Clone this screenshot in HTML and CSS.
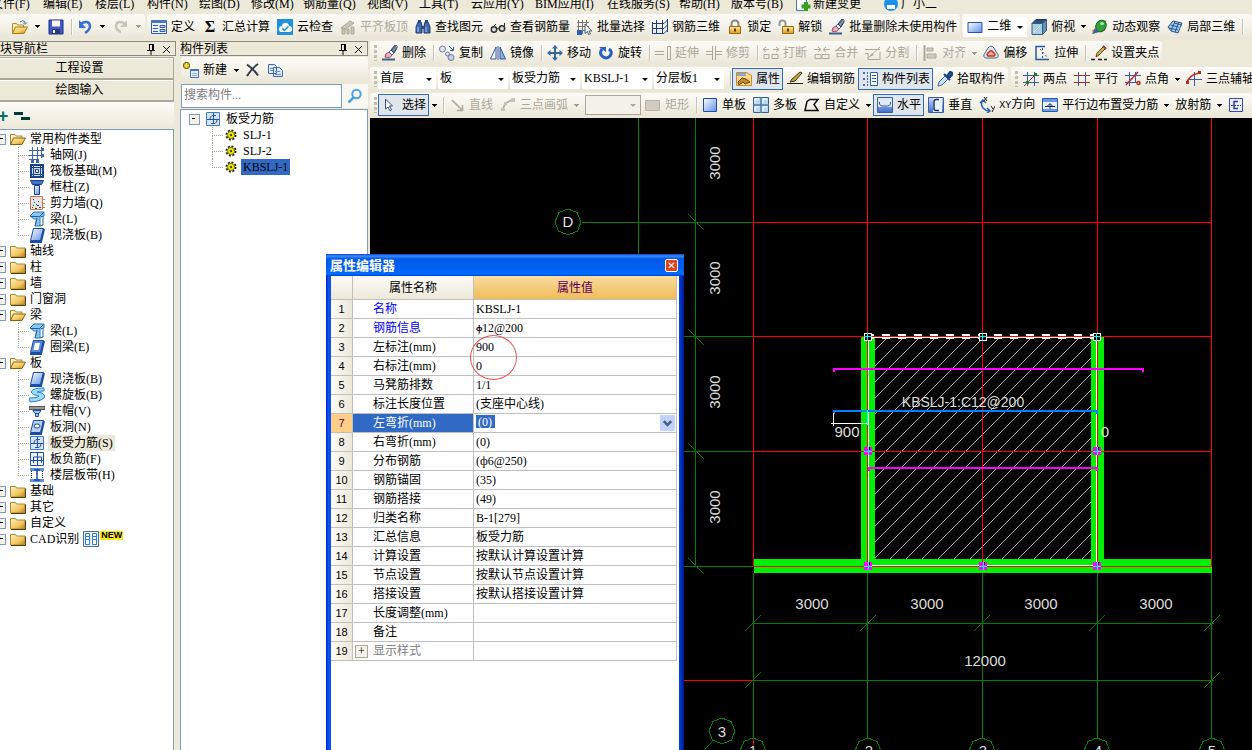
FILE: index.html
```
<!DOCTYPE html>
<html lang="zh-CN">

<head>
    <meta charset="UTF-8" />
    <title>属性编辑器 - 板受力筋</title>
    <link rel="stylesheet" href="styles.css">
</head>

<body>
    <!-- icon sprite -->
    <svg class="sprite" aria-hidden="true">
        <defs>
            <linearGradient id="gFolder" x1="0" y1="0" x2="1" y2="1"><stop offset="0" stop-color="#fff3b8"/><stop offset=".6" stop-color="#f0c860"/><stop offset="1" stop-color="#b87d10"/></linearGradient>
            <linearGradient id="gBlue" x1="0" y1="0" x2="1" y2="1"><stop offset="0" stop-color="#ffffff"/><stop offset="1" stop-color="#5f8fe8"/></linearGradient>
            <linearGradient id="gDeep" x1="0" y1="0" x2="0" y2="1"><stop offset="0" stop-color="#c8dcff"/><stop offset="1" stop-color="#3c6ccc"/></linearGradient>
            <linearGradient id="gGold" x1="0" y1="0" x2="0" y2="1"><stop offset="0" stop-color="#ffe9a0"/><stop offset="1" stop-color="#e09a20"/></linearGradient>
            <symbol id="folder" viewBox="0 0 16 16"><path d="M.5 3.500h5l1 1.500h8.500v9h-14.500z" fill="url(#gFolder)" stroke="#a8863a"/><path d="M1 14.500h14.500v-9" fill="none" stroke="#5c3c08"/></symbol>
            <symbol id="folderOpen" viewBox="0 0 16 16"><path d="M.5 13.500v-10h4.500l1 1.500h6v3" fill="#fdf0b0" stroke="#a8863a"/><path d="M.5 13.500l3-6.500h12l-3.500 6.500z" fill="url(#gFolder)" stroke="#8a6210"/></symbol>
            <symbol id="open" viewBox="0 0 16 16"><path d="M.5 14.500v-10h4l1 1.500h6v3" fill="#fdf0b0" stroke="#b08a30"/><path d="M.5 14.500l3-6.500h12l-3.500 6.500z" fill="url(#gFolder)" stroke="#a87818"/><path d="M8 3q3-3 5 0v2M11 3.500l2 2 2-2" fill="none" stroke="#4a7ab0"/></symbol>
            <symbol id="save" viewBox="0 0 16 16"><path d="M1 1h14v14h-14z" fill="#4058c8" stroke="#1c2c80"/><path d="M4 1.500h8v6h-8z" fill="#f4f6ff"/><path d="M4 10h8v5h-8z" fill="#283878"/><path d="M5 11h2v3h-2z" fill="#fff"/></symbol>
            <symbol id="undo" viewBox="0 0 16 16"><path d="M3 5q9-5 10 2 0 4-5 7" fill="none" stroke="#3a6fd8" stroke-width="2.500"/><path d="M2 1v8h7z" fill="#3a6fd8"/></symbol>
            <symbol id="redo" viewBox="0 0 16 16"><path d="M13 5q-9-5-10 2 0 4 5 6" fill="none" stroke="#c8c5b8" stroke-width="2.500"/><path d="M14 1v7h-7z" fill="#c8c5b8"/></symbol>
            <symbol id="define" viewBox="0 0 16 16"><path d="M.5 1.500h15v13h-15z" fill="#eef4ff" stroke="#385c9c"/><path d="M0 1h16v3h-16z" fill="#4c78c0"/><path d="M2 6.500h5M2 9.500h5M2 12.500h5" stroke="#385c9c"/><path d="M9 6.500h5v2h-5zM9 10.500h5v2h-5z" fill="#bcd4f8" stroke="#385c9c"/></symbol>
            <symbol id="cloud" viewBox="0 0 16 16"><path d="M0 0h16v16h-16z" fill="#2090e0"/><path d="M4 13q-3-1-2-4 1-2 3-2 1-4 5-3 2 1 2 3 3 0 3 3 0 3-3 3z" fill="#fff"/><path d="M5 9l2.500 2.500 4-4" fill="none" stroke="#2090e0" stroke-width="1.500"/></symbol>
            <symbol id="align" viewBox="0 0 16 16"><path d="M1 9l9-7 4 2-8 6zM2 10h3v5h-3zM7 10h2v5h-2zM11 8h3v7h-3z" fill="#c8c5b8" stroke="#aca899"/></symbol>
            <symbol id="find" viewBox="0 0 16 16"><path d="M3 3h3l1 4v7h-6v-6zM10 3h3l2 5v6h-6v-7z" fill="#4068a8" stroke="#203c78"/><path d="M6 7h4v3h-4zM3 1h3v2h-3zM10 1h3v2h-3z" fill="#28488c"/><path d="M3 8v5M11 8v5" stroke="#b0ccf4"/></symbol>
            <symbol id="glasses" viewBox="0 0 16 16"><circle cx="4" cy="10.500" r="2.700" fill="#d8e0e8" stroke="#333" stroke-width="1.500"/><circle cx="12" cy="9.500" r="2.700" fill="#d8e0e8" stroke="#333" stroke-width="1.500"/><path d="M6.500 10l3-1M2 9l4-4M14.500 8v-4" fill="none" stroke="#333"/></symbol>
            <symbol id="batch" viewBox="0 0 16 16"><path d="M1.500 1v14M5.500 1v14M9.500 1v8M0 3.500h12M0 7.500h12M0 11.500h8" stroke="#777" fill="none"/><path d="M0 11h5v5h-5z" fill="#2860c8"/><path d="M8 5l7 7h-3l1.500 3-2 .5-1-3-2.500 2z" fill="#eee" stroke="#567"/></symbol>
            <symbol id="rebar3d" viewBox="0 0 16 16"><path d="M.5 3v12M4.500 1v14M10.500 1v14M15.500 0v13M0 4.500h12l4-4M0 9.500h12l4-4M0 14.500h12l4-4" fill="none" stroke="#1c3c88"/></symbol>
            <symbol id="lock" viewBox="0 0 16 16"><path d="M4.500 8v-3q0-3.500 3.500-3.500t3.500 3.500v3" fill="none" stroke="#888" stroke-width="2"/><path d="M2.500 7.500h11v7h-11z" fill="url(#gGold)" stroke="#9a6a10"/><path d="M7 9.500h2v3h-2z" fill="#5c3c08"/></symbol>
            <symbol id="unlock" viewBox="0 0 16 16"><path d="M1.500 7v-2.500q0-3 3-3t3 3v3" fill="none" stroke="#999" stroke-width="2"/><path d="M4.500 7.500h11v7h-11z" fill="url(#gGold)" stroke="#9a6a10"/><path d="M9 9.500h2v3h-2z" fill="#5c3c08"/></symbol>
            <symbol id="brush" viewBox="0 0 16 16"><path d="M0 14.500h13" stroke="#3c5c90" stroke-width="2"/><path d="M3 12q0-4 4-5l3 3q-2 4-7 2z" fill="#e8b0c0" stroke="#a04868"/><path d="M7 7l2-2 3 3-2 2z" fill="#f4f6fa" stroke="#48689c"/><path d="M9 5l4-5 2 1v2l-3 5z" fill="#4878b8" stroke="#28487c"/><path d="M11 6l4-5" stroke="#f0a030"/></symbol>
            <symbol id="view2d" viewBox="0 0 16 16"><path d="M1 3.500h14v10h-14z" fill="url(#gBlue)" stroke="#2850b8"/></symbol>
            <symbol id="cube" viewBox="0 0 16 16"><path d="M1 4.500l4-4h10.500l-4 4z" fill="#2c5078" stroke="#20384c"/><path d="M1 4.500h10.500v11h-10.500z" fill="#a8d0e8" stroke="#385c80"/><path d="M11.500 4.500l4-4v11l-4 4z" fill="#6090b4" stroke="#385c80"/><path d="M3 13l6-6" stroke="#fff"/></symbol>
            <symbol id="orbit" viewBox="0 0 16 16"><path d="M0 12q8-2 14-10M1 14q6-2 12-3" fill="none" stroke="#e89020" stroke-width="1.500"/><ellipse cx="9" cy="7" rx="5" ry="6" fill="#30a040" stroke="#186028" transform="rotate(30 9 7)"/><ellipse cx="10" cy="4.500" rx="2" ry="1.500" fill="#a0f0a0"/><path d="M0 15l7-2-4-4z" fill="#4060a0"/></symbol>
            <symbol id="local3d" viewBox="0 0 16 16"><path d="M1 8l5-6 9 2-4 10-7-2z" fill="#a8ccec" stroke="#285890"/><path d="M3.500 6l8 2M8 2.500l-4 9M12 3l-4 10M2 9l9 2M7 4l8 2" fill="none" stroke="#285890"/></symbol>
            <symbol id="copyObj" viewBox="0 0 16 16"><circle cx="3.500" cy="4" r="3" fill="#dfe6f4" stroke="#6c7c98"/><circle cx="8.500" cy="9" r="2" fill="#dfe6f4" stroke="#6c7c98"/><circle cx="12" cy="12.500" r="3" fill="#c4d0e4" stroke="#6c7c98"/><path d="M10 1l4 4M14.500 2v3.500h-3.500" fill="none" stroke="#2c58a8"/></symbol>
            <symbol id="mirror" viewBox="0 0 16 16"><path d="M6 2v12h-5.500z" fill="#f4f8ff" stroke="#34589c"/><path d="M10 2v12h5.500z" fill="#88b0ec" stroke="#34589c"/><path d="M8 1v14" stroke="#34589c"/></symbol>
            <symbol id="move" viewBox="0 0 16 16"><path d="M8 2v12M2 8h12" stroke="#34689c" stroke-width="2"/><path d="M8 0l3 3.500h-6zM8 16l3-3.500h-6zM0 8l3.500-3v6zM16 8l-3.500-3v6z" fill="#34689c"/></symbol>
            <symbol id="rotate" viewBox="0 0 16 16"><path d="M4 4q-3 4 0 7 4 4 8 0 3-4-1-7" fill="none" stroke="#2860c8" stroke-width="3"/><path d="M1 2h7v5z" fill="#2860c8"/></symbol>
            <symbol id="extend" viewBox="0 0 16 16"><path d="M0 6.500h9M0 9.500h9M12.500 1v14M15.500 1v14M12 1.500h4M12 14.500h4" stroke="#aca899" fill="none"/></symbol>
            <symbol id="trim" viewBox="0 0 16 16"><path d="M0 6.500h6M0 9.500h6M10 6.500h6M10 9.500h6M6.500 1v14M9.500 1v14" stroke="#aca899" fill="none"/></symbol>
            <symbol id="break" viewBox="0 0 16 16"><path d="M1 9.500h5v4h-5zM9 9.500h6v4h-6zM0 4.500h6M10 4.500h6M3 2l-3 2.500 3 2.500M13 2l3 2.500-3 2.500" stroke="#aca899" fill="none"/></symbol>
            <symbol id="merge" viewBox="0 0 16 16"><path d="M1 9.500h6v4h-6zM8 9.500h7v4h-7zM0 4.500h6M10 4.500h6M4 2l3 2.500-3 2.500M12 2l-3 2.500 3 2.500" stroke="#aca899" fill="none"/></symbol>
            <symbol id="split" viewBox="0 0 16 16"><path d="M0 4.500h15M0 8.500h3v6h12v-8M3 13l12-11" stroke="#aca899" fill="none"/><path d="M4 12l3-4 2 2z" fill="#aca899"/></symbol>
            <symbol id="alignTo" viewBox="0 0 16 16"><path d="M2.500 0v16" stroke="#aca899" stroke-width="2"/><path d="M5 3h6v3h-6zM5 9h9v4h-9z" fill="#d0cdc0" stroke="#aca899"/></symbol>
            <symbol id="offset" viewBox="0 0 16 16"><path d="M3 13q-4-1-1-5l3-5q3-4 6 0l3 5q3 4-1 5z" fill="#dce8f4" stroke="#48688c"/><path d="M5 11q-2-1 0-3l2-2q1-1 2 0l2 2q2 2 0 3z" fill="#f8b0a0" stroke="#d03020" stroke-width="1.500"/></symbol>
            <symbol id="stretch" viewBox="0 0 16 16"><path d="M11 1.500h-9v13h13" fill="none" stroke="#28589c" stroke-width="1.500"/><path d="M6 4l8 9M8.500 3v11" stroke="#28589c" stroke-dasharray="2 2"/></symbol>
            <symbol id="grip" viewBox="0 0 16 16"><path d="M0 14.500h4M7 14.500h4M13 14.500h3" stroke="#222" stroke-width="1.500"/><path d="M5 12l1-4 7-7 2 2-7 7z" fill="#d8b050" stroke="#5c4820"/><path d="M12 1l3 3" stroke="#c03028" stroke-width="2"/></symbol>
            <symbol id="props" viewBox="0 0 16 16"><path d="M.5 1.500h10l5 3v10h-15z" fill="#ffd890" stroke="#d88820"/><path d="M1 2h9v3h-9z" fill="#88a8d8"/><path d="M2 11l4-4 4 1 4 3-5 2-2-2-4 3z" fill="#c88c20" stroke="#684408"/></symbol>
            <symbol id="pencil" viewBox="0 0 16 16"><path d="M0 12.500h16" stroke="#222"/><path d="M3 11l2-3 8-7 2 1-7 8z" fill="#c8a040" stroke="#443410"/></symbol>
            <symbol id="listIcon" viewBox="0 0 16 16"><path d="M8.500 1.500h7v13h-7z" fill="#fff" stroke="#2c60b0"/><path d="M10 4.500h4M10 7.500h4M10 10.500h4" stroke="#2c60b0"/><path d="M1 2h2M1 8h2M1 14h2M5 2h1M5 5h1M5 8h1M5 11h1M5 14h1" stroke="#4470b0" stroke-width="2"/></symbol>
            <symbol id="picker" viewBox="0 0 16 16"><path d="M1 15l1-4 7-7 3 3-7 7z" fill="#c8e0f4" stroke="#3c6c9c"/><path d="M7 3l6 6M10 5l3-4q3 0 2 3l-3 3z" fill="#2460ac" stroke="#18407c" stroke-width="2"/></symbol>
            <symbol id="twoPt" viewBox="0 0 16 16"><path d="M4.500 1v14M11.500 1v14M0 4.500h16M0 11.500h16" stroke="#385ca8"/><path d="M1 15l13-13" stroke="#c02828"/><path d="M3 10h3v3h-3zM11 2h3v3h-3z" fill="#208020"/></symbol>
            <symbol id="parallel" viewBox="0 0 16 16"><path d="M4.500 1v14M11.500 1v14" stroke="#385ca8"/><path d="M0 4.500h16M0 11.500h16" stroke="#c02828"/></symbol>
            <symbol id="angle" viewBox="0 0 16 16"><path d="M4.500 1v14M10.500 1v11M0 4.500h16M0 11.500h12" stroke="#385ca8"/><path d="M1 14l12-13" stroke="#c02828" stroke-width="1.500"/><circle cx="13.500" cy="12" r="1.500" fill="none" stroke="#c02828" stroke-width="1.500"/></symbol>
            <symbol id="arcAxis" viewBox="0 0 16 16"><path d="M8.500 1v14M3 8.500h13" stroke="#385ca8"/><path d="M1 13q1-9 12-11" fill="none" stroke="#d02020" stroke-width="1.500"/><path d="M0 10h3v3h-3zM12 0h3v3h-3z" fill="#d02020"/></symbol>
            <symbol id="cursor" viewBox="0 0 16 16"><path d="M3.500 2v10l2.500-2 2 4 1.500-1-2-4h3z" fill="#fff" stroke="#385080"/></symbol>
            <symbol id="line" viewBox="0 0 16 16"><path d="M3 3l10 10M13.500 8v5.500h-5.500" stroke="#aca899" stroke-width="1.500" fill="none"/></symbol>
            <symbol id="arc" viewBox="0 0 16 16"><path d="M3 14q0-9 10-11" fill="none" stroke="#aca899" stroke-width="1.500"/><path d="M1 11h4v3h-4zM11 1h4v4h-4zM4 5h3v3h-3z" fill="#c8c5b8"/></symbol>
            <symbol id="rect" viewBox="0 0 16 16"><path d="M.5 3.500h14v10h-14z" fill="#d0cdc0" stroke="#b8b5a8"/></symbol>
            <symbol id="slab" viewBox="0 0 16 16"><path d="M1.500 1.500h13v13h-13z" fill="url(#gBlue)" stroke="#1c4ca8"/></symbol>
            <symbol id="multi" viewBox="0 0 16 16"><path d="M.5 .5h15v15h-15z" fill="#b8d8f4" stroke="#3c608c"/><path d="M8 0v16M0 8h16" stroke="#5078a8" stroke-width="1.500"/><path d="M2 6v-4h4M10 6v-4h4M2 14v-4h4M10 14v-4h4" fill="none" stroke="#fff"/></symbol>
            <symbol id="custom" viewBox="0 0 16 16"><path d="M1 13.500l2-9 3-2h8l-4 5 4 6z" fill="none" stroke="#111" stroke-width="1.500"/></symbol>
            <symbol id="horiz" viewBox="0 0 16 16"><path d="M.5 .5h15v15h-15z" fill="url(#gDeep)" stroke="#3c5ca0"/><path d="M1 1h14v9h-14z" fill="#dfeafc"/><path d="M2.500 5v2q1 2 3 2h5q2 0 3-2v-2" fill="none" stroke="#38507c"/></symbol>
            <symbol id="vert" viewBox="0 0 16 16"><path d="M.5 .5h15v15h-15z" fill="url(#gDeep)" stroke="#3c5ca0"/><path d="M5 1h9v14h-9z" fill="#eaf2ff"/><path d="M11 2.500h-3q-2 0-2 2v7q0 2 2 2h3" fill="none" stroke="#18306c" stroke-width="1.500"/></symbol>
            <symbol id="xy" viewBox="0 0 16 16"><path d="M4 3q-3 4 0 8 3 3 6 3M1 6l3-3 3 3M8 11l3 3-3 2" fill="none" stroke="#2860b8" stroke-width="1.500"/><path d="M5 0l3 4M8 0l-3 4M12 9l2 3M16 9l-3 6" stroke="#222"/></symbol>
            <symbol id="edge" viewBox="0 0 16 16"><path d="M.5 1.500h15v13h-15z" fill="#eaf2ff" stroke="#2858b0"/><path d="M1 2h14v3h-14zM1 12h14v2h-14z" fill="#6c98e8"/><path d="M3 9.500h10M8 12v-5M5.500 9l2.500-2.500 2.500 2.500" fill="none" stroke="#18306c"/></symbol>
            <symbol id="secE" viewBox="0 0 16 16"><path d="M1.500 1.500h13v13h-13z" fill="#eaf0ff" stroke="#4048c0"/><path d="M10 4.500h-4v7h4" fill="none" stroke="#3038a0" stroke-width="1.500"/><path d="M3 8.500h10" stroke="#3038a0" stroke-dasharray="2 1"/></symbol>
            <symbol id="newItem" viewBox="0 0 16 16"><path d="M3.500 0v7M0 3.500h7" stroke="#7c6808" stroke-width="4"/><path d="M3.500 1v5M1 3.500h5" stroke="#f8e040" stroke-width="2"/><path d="M7.500 7.500h8v8h-8z" fill="#e4eeff" stroke="#4c74b8"/><path d="M7 7h9v2h-9z" fill="#4c74b8"/><path d="M9 11.500h5M9 13.500h5" stroke="#8cacdc"/></symbol>
            <symbol id="del" viewBox="0 0 16 16"><path d="M2 2.500q7 5 11 11M13 2q-7 5-11 12" fill="none" stroke="#333c48" stroke-width="2"/></symbol>
            <symbol id="copy" viewBox="0 0 16 16"><path d="M1.500 2.500h6l2 2v7h-8zM6.500 5.500h6l3 3v6h-9z" fill="#dce8fc" stroke="#3c68b8"/><path d="M8 9.500h5M8 12.500h6M3 6.500h3M3 8.500h3" stroke="#6c94d4"/></symbol>
            <symbol id="search" viewBox="0 0 16 16"><circle cx="9.500" cy="6" r="4.200" fill="#fff" stroke="#4ca0e4" stroke-width="2"/><path d="M6.500 9.500l-5 5" stroke="#4ca0e4" stroke-width="2.500"/></symbol>
            <symbol id="pin" viewBox="0 0 16 16"><path d="M6.500 3v6M6 3.500h4M4 9.500h8M8 10v4" stroke="#000" fill="none"/><path d="M9 3h2v6h-2z"/></symbol>
            <symbol id="xSmall" viewBox="0 0 16 16"><path d="M4 5l7 7M11 5l-7 7" stroke="#000"/></symbol>
            <symbol id="axisNet" viewBox="0 0 16 16"><path d="M3.500 0v15M8.500 0v15M0 3.500h14M0 8.500h14M12.500 0v11M0 12.500h10" stroke="#3c64b4"/><path d="M12 1h3v3h-3zM12 7h3v3h-3zM2 13h3v3h-3zM7 13h3v3h-3z" fill="#3c64b4"/></symbol>
            <symbol id="raft" viewBox="0 0 16 16"><path d="M2 2h12v12h-12z" fill="#c8dcf8" stroke="#1c4484" stroke-width="2"/><path d="M4.500 2v12M11.500 2v12M2 4.500h12M2 11.500h12" stroke="#1c4484"/><path d="M6.500 6.500h3v3h-3z" fill="#fff" stroke="#1c4484"/></symbol>
            <symbol id="column" viewBox="0 0 16 16"><path d="M1.500 1.500h13l-2 4h-9z" fill="#4074c8" stroke="#18408c"/><path d="M5.500 6.500h5v9h-5z" fill="url(#gBlue)" stroke="#18408c"/></symbol>
            <symbol id="wall" viewBox="0 0 16 16"><path d="M1.500 1.500h12v13h-12z" fill="#e4e4e4" stroke="#c87850"/><path d="M3 12.500h1M5 7.500h1M8 10.500h2M6 13.500h2M10 12.500h2M4 4.500h1M9 6.500h1M7 9.500h1M4 10.500h1" stroke="#444"/><path d="M13 4.500h3M13 8.500h3M13 12.500h3" stroke="#d08040"/></symbol>
            <symbol id="beam" viewBox="0 0 16 16"><path d="M1 5l4-4h10v4l-4 1v9h-5l2-7h-3z" fill="#8cc8f4" stroke="#2c78b8"/><path d="M1.500 5.500h9l4-4M8 7l-2 8M14 5v9l-3 1" fill="none" stroke="#1c60a0"/></symbol>
            <symbol id="cast" viewBox="0 0 16 16"><path d="M4.500 1.500h10l-3 12h-10z" fill="url(#gBlue)" stroke="#1c4ca8"/><path d="M1 15h11l3-13" fill="none" stroke="#1c4ca8" stroke-width="2"/></symbol>
            <symbol id="ring" viewBox="0 0 16 16"><path d="M4.500 1.500h10l-3 12h-10z" fill="#5888dc" stroke="#1c4ca8"/><path d="M6 4h5l-1.500 7h-5z" fill="#fff"/><path d="M1 15h11l3-13" fill="none" stroke="#1c4ca8" stroke-width="2"/></symbol>
            <symbol id="spiral" viewBox="0 0 16 16"><path d="M15 1q-12 0-13 4 1 3 8 4-1 2-10 2l1 4q14-1 15-6-2-4-8-4 1-1 7-1z" fill="#9cdcfc" stroke="#2c80c8"/></symbol>
            <symbol id="cap" viewBox="0 0 16 16"><path d="M0 3.500h16v3h-16z" fill="#999" stroke="#555"/><path d="M4 7.500h8l-2 3h-4zM6.500 10.500h3v3h-3z" fill="#a8c8f8" stroke="#1c4ca8"/></symbol>
            <symbol id="hole" viewBox="0 0 16 16"><path d="M4.500 1.500h10l-3 12h-10z" fill="#b4d0f8" stroke="#1c4ca8"/><ellipse cx="8" cy="7" rx="3" ry="2" fill="#fff" stroke="#1c4ca8"/><path d="M1 15h11l3-13" fill="none" stroke="#1c4ca8" stroke-width="2"/></symbol>
            <symbol id="rebar" viewBox="0 0 16 16"><path d="M1.500 1.500h13v13h-13z" fill="#d4e4fc" stroke="#4878d0"/><path d="M8.500 2v11M2 8.500h12M11 4.500h-4q-2 1-2 4M6 12.500h4q2-1 2-4" fill="none" stroke="#2454b0"/></symbol>
            <symbol id="negbar" viewBox="0 0 16 16"><path d="M1.500 1.500h13v13h-13z" fill="#eef4ff" stroke="#1c4ca8"/><path d="M8.500 2v13M2 9.500h12M4.500 12v-6h8v6" fill="none" stroke="#1c4ca8"/></symbol>
            <symbol id="strip" viewBox="0 0 16 16"><path d="M1 1h14v3h-14zM1 12h14v3h-14z" fill="#5c90e0"/><path d="M8 2v12M5 3h6M5 13h6" stroke="#1c4ca8" stroke-width="1.500"/><path d="M2.500 4v8M13.500 4v8" stroke="#222" stroke-dasharray="1 1"/></symbol>
            <symbol id="cad" viewBox="0 0 16 16"><path d="M.5 .5h15v15h-15z" fill="#e8f2fc" stroke="#5c6c80"/><path d="M2.500 2.500h4v11h-4zM9.500 2.500h4v11h-4z" fill="#fff" stroke="#2c80d8"/><path d="M3 5.500h3M3 8.500h3M10 5.500h3M10 8.500h3" stroke="#2c80d8"/></symbol>
            <symbol id="gear" viewBox="0 0 12 12"><circle cx="6" cy="6" r="4.500" fill="none" stroke="#222" stroke-width="2" stroke-dasharray="2 1.500"/><circle cx="6" cy="6" r="3.500" fill="#f8f000" stroke="#807800"/><circle cx="6" cy="6" r="1.200" fill="#444"/></symbol>
            <symbol id="addDoc" viewBox="0 0 16 16"><path d="M1.500 1.500h10v13h-10z" fill="#fff" stroke="#3c78c8"/><path d="M11 6v9M6.500 10.500h9" stroke="#38a020" stroke-width="4"/></symbol>
            <symbol id="user" viewBox="0 0 16 16"><circle cx="8" cy="8" r="7" fill="#1c90f0"/><path d="M4 9h8v4h-8z" fill="#fff"/></symbol>
        </defs>
    </svg>

    <nav class="menubar">
        <button class="m2">文件(F)</button><button class="m2">编辑(E)</button><button class="m2">楼层(L)</button><button class="m2">构件(N)</button><button class="m2">绘图(D)</button><button class="m2">修改(M)</button><button class="m3">钢筋量(Q)</button><button class="m2">视图(V)</button><button class="m2">工具(T)</button><button class="m3">云应用(Y)</button><button class="m4">BIM应用(I)</button><button class="m4">在线服务(S)</button><button class="m2">帮助(H)</button><button class="m3">版本号(B)</button>
        <button class="m5"><svg><use href="#addDoc"/></svg>新建变更</button><button><svg><use href="#user"/></svg>广小二</button>
    </nav>

    <div class="toolrow top">
        <div class="bar first">
            <button class="tool"><svg><use href="#open"/></svg></button><i class="arrow"></i>
            <button class="tool"><svg><use href="#save"/></svg></button><i class="sep"></i>
            <button class="tool"><svg><use href="#undo"/></svg></button><i class="arrow"></i>
            <button class="tool" disabled><svg><use href="#redo"/></svg></button><i class="arrow off"></i>
        </div>
        <div class="bar">
            <button class="tool"><svg><use href="#define"/></svg>定义</button>
            <button class="tool"><b class="sigma">Σ</b>汇总计算</button>
            <button class="tool"><svg><use href="#cloud"/></svg>云检查</button>
            <button class="tool" disabled><svg><use href="#align"/></svg>平齐板顶</button>
            <button class="tool"><svg><use href="#find"/></svg>查找图元</button>
            <button class="tool"><svg><use href="#glasses"/></svg>查看钢筋量</button>
            <button class="tool"><svg><use href="#batch"/></svg>批量选择</button>
            <button class="tool"><svg><use href="#rebar3d"/></svg>钢筋三维</button>
            <button class="tool"><svg><use href="#lock"/></svg>锁定</button>
            <button class="tool"><svg><use href="#unlock"/></svg>解锁</button>
            <button class="tool"><svg><use href="#brush"/></svg>批量删除未使用构件</button>
        </div>
        <div class="bar grow">
            <span class="viewmode"><svg><use href="#view2d"/></svg><label class="combo"><select aria-label="视图模式"><option>二维</option></select></label></span>
            <button class="tool"><svg><use href="#cube"/></svg>俯视</button><i class="arrow"></i>
            <button class="tool"><svg><use href="#orbit"/></svg>动态观察</button>
            <button class="tool"><svg><use href="#local3d"/></svg>局部三维</button><i class="sep"></i>
        </div>
    </div>

    <main>
        <aside class="nav-panel">
            <header class="panel-head"><span>块导航栏</span><svg><use href="#pin"/></svg><svg><use href="#xSmall"/></svg></header>
            <button class="stack">工程设置</button>
            <button class="stack">绘图输入</button>
            <div class="fold"><button aria-label="展开">+</button><button class="minus" aria-label="折叠"></button></div>
            <ul class="tree">
                <li><span class="node"><svg><use href="#folderOpen"/></svg>常用构件类型</span>
                    <ul>
                        <li><svg><use href="#axisNet"/></svg><span>轴网(J)</span></li>
                        <li><svg><use href="#raft"/></svg><span>筏板基础(M)</span></li>
                        <li><svg><use href="#column"/></svg><span>框柱(Z)</span></li>
                        <li><svg><use href="#wall"/></svg><span>剪力墙(Q)</span></li>
                        <li><svg><use href="#beam"/></svg><span>梁(L)</span></li>
                        <li><svg><use href="#cast"/></svg><span>现浇板(B)</span></li>
                    </ul>
                </li>
                <li><span class="node"><svg><use href="#folder"/></svg>轴线</span></li>
                <li><span class="node"><svg><use href="#folder"/></svg>柱</span></li>
                <li><span class="node"><svg><use href="#folder"/></svg>墙</span></li>
                <li><span class="node"><svg><use href="#folder"/></svg>门窗洞</span></li>
                <li><span class="node"><svg><use href="#folderOpen"/></svg>梁</span>
                    <ul>
                        <li><svg><use href="#beam"/></svg><span>梁(L)</span></li>
                        <li><svg><use href="#ring"/></svg><span>圈梁(E)</span></li>
                    </ul>
                </li>
                <li><span class="node"><svg><use href="#folderOpen"/></svg>板</span>
                    <ul>
                        <li><svg><use href="#cast"/></svg><span>现浇板(B)</span></li>
                        <li><svg><use href="#spiral"/></svg><span>螺旋板(B)</span></li>
                        <li><svg><use href="#cap"/></svg><span>柱帽(V)</span></li>
                        <li><svg><use href="#hole"/></svg><span>板洞(N)</span></li>
                        <li><svg><use href="#rebar"/></svg><span class="current">板受力筋(S)</span></li>
                        <li><svg><use href="#negbar"/></svg><span>板负筋(F)</span></li>
                        <li><svg><use href="#strip"/></svg><span>楼层板带(H)</span></li>
                    </ul>
                </li>
                <li><span class="node"><svg><use href="#folder"/></svg>基础</span></li>
                <li><span class="node"><svg><use href="#folder"/></svg>其它</span></li>
                <li><span class="node"><svg><use href="#folder"/></svg>自定义</span></li>
                <li><span class="node"><svg><use href="#folder"/></svg>CAD识别<svg><use href="#cad"/></svg><em>NEW</em></span></li>
            </ul>
        </aside>

        <aside class="list-panel">
            <header class="panel-head"><span>构件列表</span><svg><use href="#pin"/></svg><svg><use href="#xSmall"/></svg></header>
            <div class="bar list-tools">
                <button class="tool"><svg><use href="#newItem"/></svg>新建</button><i class="arrow"></i>
                <button class="tool" aria-label="删除"><svg><use href="#del"/></svg></button>
                <button class="tool" aria-label="复制"><svg><use href="#copy"/></svg></button>
            </div>
            <div class="search">
                <input type="text" placeholder="搜索构件..." aria-label="搜索构件">
                <button aria-label="搜索"><svg><use href="#search"/></svg></button>
            </div>
            <ul class="tree items">
                <li><span class="node"><svg><use href="#rebar"/></svg>板受力筋</span>
                    <ul>
                        <li><svg><use href="#gear"/></svg><span>SLJ-1</span></li>
                        <li><svg><use href="#gear"/></svg><span>SLJ-2</span></li>
                        <li><svg><use href="#gear"/></svg><span class="selected">KBSLJ-1</span></li>
                    </ul>
                </li>
            </ul>
        </aside>

        <section class="work">
            <div class="toolrow">
                <div class="bar grip">
                    <button class="tool"><svg><use href="#brush"/></svg>删除</button><i class="sep"></i>
                    <button class="tool"><svg><use href="#copyObj"/></svg>复制</button>
                    <button class="tool"><svg><use href="#mirror"/></svg>镜像</button><i class="sep"></i>
                    <button class="tool"><svg><use href="#move"/></svg>移动</button>
                    <button class="tool"><svg><use href="#rotate"/></svg>旋转</button><i class="sep"></i>
                    <button class="tool" disabled><svg><use href="#extend"/></svg>延伸</button>
                    <button class="tool" disabled><svg><use href="#trim"/></svg>修剪</button><i class="sep"></i>
                    <button class="tool" disabled><svg><use href="#break"/></svg>打断</button>
                    <button class="tool" disabled><svg><use href="#merge"/></svg>合并</button>
                    <button class="tool" disabled><svg><use href="#split"/></svg>分割</button><i class="sep"></i>
                    <button class="tool" disabled><svg><use href="#alignTo"/></svg>对齐</button><i class="arrow off"></i>
                    <button class="tool"><svg><use href="#offset"/></svg>偏移</button>
                    <button class="tool"><svg><use href="#stretch"/></svg>拉伸</button><i class="sep"></i>
                    <button class="tool"><svg><use href="#grip"/></svg>设置夹点</button>
                </div>
            </div>
            <div class="toolrow">
                <div class="bar grip">
                    <label class="combo narrow"><select aria-label="楼层"><option>首层</option></select></label>
                    <label class="combo"><select aria-label="构件大类"><option>板</option></select></label>
                    <label class="combo"><select aria-label="构件类型"><option>板受力筋</option></select></label>
                    <label class="combo"><select aria-label="构件"><option>KBSLJ-1</option></select></label>
                    <label class="combo"><select aria-label="分层"><option>分层板1</option></select></label><i class="sep"></i>
                    <button class="tool active"><svg><use href="#props"/></svg>属性</button>
                    <button class="tool"><svg><use href="#pencil"/></svg>编辑钢筋</button>
                    <button class="tool active"><svg><use href="#listIcon"/></svg>构件列表</button>
                    <button class="tool"><svg><use href="#picker"/></svg>拾取构件</button>
                </div>
                <div class="bar grip grow">
                    <button class="tool"><svg><use href="#twoPt"/></svg>两点</button>
                    <button class="tool"><svg><use href="#parallel"/></svg>平行</button>
                    <button class="tool"><svg><use href="#angle"/></svg>点角</button><i class="arrow"></i>
                    <button class="tool"><svg><use href="#arcAxis"/></svg>三点辅轴</button>
                </div>
            </div>
            <div class="toolrow last">
                <div class="bar grip grow">
                    <button class="tool active"><svg><use href="#cursor"/></svg>选择</button><i class="arrow"></i><i class="sep"></i>
                    <button class="tool" disabled><svg><use href="#line"/></svg>直线</button>
                    <button class="tool" disabled><svg><use href="#arc"/></svg>三点画弧</button><i class="arrow off"></i>
                    <label class="combo off"><select aria-label="半径" disabled><option></option></select></label>
                    <button class="tool" disabled><svg><use href="#rect"/></svg>矩形</button><i class="sep"></i>
                    <button class="tool"><svg><use href="#slab"/></svg>单板</button>
                    <button class="tool"><svg><use href="#multi"/></svg>多板</button>
                    <button class="tool"><svg><use href="#custom"/></svg>自定义</button><i class="arrow"></i>
                    <button class="tool active"><svg><use href="#horiz"/></svg>水平</button>
                    <button class="tool"><svg><use href="#vert"/></svg>垂直</button>
                    <button class="tool"><svg><use href="#xy"/></svg><span><span class="latin">XY</span>方向</span></button>
                    <button class="tool"><svg><use href="#edge"/></svg>平行边布置受力筋</button><i class="arrow"></i>
                    <button class="tool">放射筋</button><i class="arrow"></i>
                    <button class="tool" aria-label="按板边布置"><svg><use href="#secE"/></svg></button>
                </div>
            </div>

            <div class="canvas">
                <svg>
                    <defs>
                        <pattern id="hatch" x="9" y="0" width="16" height="16" patternUnits="userSpaceOnUse"><path d="M-1 17L17 -1" stroke="#b4b4b4" shape-rendering="crispEdges"/></pattern>
                        <path id="tickH" d="M-8 8L8 -8"/>
                        <path id="tickV" d="M-8 -8L8 8"/>
                        <path id="bubble" d="M0-13L9-9.500 13 0 9.500 9 0 13-9.500 9-13 0-9-9.500z" fill="none"/>
                        <g id="knot"><path d="M-4-4h8v8h-8z" fill="#f0f"/><path d="M0-4h2v3h-2z" fill="#000"/><path d="M-4 .5h8M.5-4v8" stroke="#0ff"/></g>
                        <g id="knotTop"><path d="M-4-4h8v8h-8z" fill="#fff"/><path d="M-3-3h6v6h-6z" fill="#000"/><path d="M-4-.5h8M-.5-4v8" stroke="#0ff"/></g>
                    </defs>
                    <!-- model coordinates start at the window corner -->
                    <g transform="translate(-370 -118)" shape-rendering="crispEdges">
                        <path d="M875 338h216v221h-216z" fill="url(#hatch)"/>
                        <path d="M861 337h14v222h-14zM1091 337h13v222h-13zM754 559h458v14h-458z" fill="#00f000"/>
                        <g stroke="#008000" fill="none">
                            <path d="M638.500 118v140M695.500 118v449M582 222.500h171M684 336.500h69M684 451.500h69M684 566.500h69"/>
                            <path d="M753.500 573v165M867.500 573v165M982.500 573v165M1097.500 573v165M1211.500 573v165M753 623.500h461M753 680.500h461M712 742l-9 9"/>
                            <use href="#tickV" x="696" y="222"/><use href="#tickV" x="696" y="337"/><use href="#tickV" x="696" y="451"/><use href="#tickV" x="696" y="566"/>
                            <use href="#tickH" x="753" y="623"/><use href="#tickH" x="868" y="623"/><use href="#tickH" x="982" y="623"/><use href="#tickH" x="1097" y="623"/><use href="#tickH" x="1212" y="623"/>
                            <use href="#tickH" x="753" y="680"/><use href="#tickH" x="1212" y="680"/>
                            <use href="#bubble" x="568" y="222"/><use href="#bubble" x="722" y="731"/>
                            <use href="#bubble" x="753" y="751"/><use href="#bubble" x="868" y="751"/><use href="#bubble" x="982" y="751"/><use href="#bubble" x="1097" y="751"/><use href="#bubble" x="1212" y="751"/>
                        </g>
                        <path d="M868.500 338v228M1096.500 338v228M868 565.500h229M868 337.500h229" stroke="#fff"/>
                        <path d="M866 336.500h230" stroke="#fff" stroke-width="5" stroke-dasharray="8"/>
                        <path d="M753.500 118v448M867.500 118v448M982.500 118v448M1097.500 118v448M1211.500 118v448M753 222.500h459M753 336.500h459M753 451.500h459M753 566.500h459M684 680.500h69M753.500 739v6" stroke="#f00"/>
                        <path d="M834 372v-3h309v3M869 471v-3h228v3" fill="none" stroke="#f0f" stroke-width="2"/>
                        <path d="M834 414v-3h263v3" fill="none" stroke="#0080ff" stroke-width="2"/>
                        <path d="M833.500 413v13M831 423.500h37" stroke="#fff"/>
                        <path d="M867.500 410v15" stroke="#0ff"/>
                        <use href="#knotTop" x="868" y="337"/><use href="#knotTop" x="983" y="337"/><use href="#knotTop" x="1097" y="337"/>
                        <use href="#knot" x="868" y="451"/><use href="#knot" x="1097" y="451"/><use href="#knot" x="868" y="566"/><use href="#knot" x="983" y="566"/><use href="#knot" x="1097" y="566"/>
                        <g class="dims">
                            <text x="812" y="609">3000</text><text x="927" y="609">3000</text><text x="1041" y="609">3000</text><text x="1156" y="609">3000</text>
                            <text x="985" y="666">12000</text>
                            <text transform="translate(720 163) rotate(-90)">3000</text><text transform="translate(720 278) rotate(-90)">3000</text><text transform="translate(720 392) rotate(-90)">3000</text><text transform="translate(720 507) rotate(-90)">3000</text>
                            <text x="568" y="227">D</text><text x="722" y="737">3</text>
                            <text x="753" y="756">1</text><text x="869" y="756">2</text><text x="983" y="756">3</text><text x="1098" y="756">4</text><text x="1212" y="756">5</text>
                            <text x="847" y="437">900</text><text x="1105" y="437">0</text>
                            <text class="tag" x="963" y="407">KBSLJ-1:C12@200</text>
                        </g>
                    </g>
                </svg>
            </div>
        </section>
    </main>

    <div class="dialog" role="dialog" aria-label="属性编辑器">
        <header><h2>属性编辑器</h2><button aria-label="关闭">✕</button></header>
        <div class="sheet">
            <table>
                <thead>
                    <tr><th class="num"></th><th class="name">属性名称</th><th class="val">属性值</th></tr>
                </thead>
                <tbody>
                    <tr><th>1</th><td class="key">名称</td><td>KBSLJ-1</td></tr>
                    <tr><th>2</th><td class="key">钢筋信息</td><td>ⲫ12@200</td></tr>
                    <tr><th>3</th><td>左标注(mm)</td><td>900</td></tr>
                    <tr><th>4</th><td>右标注(mm)</td><td>0</td></tr>
                    <tr><th>5</th><td>马凳筋排数</td><td>1/1</td></tr>
                    <tr><th>6</th><td>标注长度位置</td><td>(支座中心线)</td></tr>
                    <tr class="editing"><th>7</th><td>左弯折(mm)</td><td><div class="edit"><input type="text" value="(0)" aria-label="左弯折"><button aria-label="展开选项"><svg viewBox="0 0 16 16"><path d="M4 6l4 4 4-4" fill="none" stroke="#4d6185" stroke-width="3"/></svg></button></div></td></tr>
                    <tr><th>8</th><td>右弯折(mm)</td><td>(0)</td></tr>
                    <tr><th>9</th><td>分布钢筋</td><td>(ф6@250)</td></tr>
                    <tr><th>10</th><td>钢筋锚固</td><td>(35)</td></tr>
                    <tr><th>11</th><td>钢筋搭接</td><td>(49)</td></tr>
                    <tr><th>12</th><td>归类名称</td><td>B-1[279]</td></tr>
                    <tr><th>13</th><td>汇总信息</td><td>板受力筋</td></tr>
                    <tr><th>14</th><td>计算设置</td><td>按默认计算设置计算</td></tr>
                    <tr><th>15</th><td>节点设置</td><td>按默认节点设置计算</td></tr>
                    <tr><th>16</th><td>搭接设置</td><td>按默认搭接设置计算</td></tr>
                    <tr><th>17</th><td>长度调整(mm)</td><td></td></tr>
                    <tr><th>18</th><td>备注</td><td></td></tr>
                    <tr class="group"><th>19</th><td><button aria-label="展开显示样式">+</button>显示样式</td><td></td></tr>
                </tbody>
            </table>
        </div>
        <i class="mark"></i>
    </div>
</body>

</html>
```
FILE: styles.css
```
:root {
    --face: #ece9d8;
    --line: #aca899;
    --edge: #7f9db9;
    --pick: #316ac5;
    --cell: #c0c0c0;
    --font: "Liberation Serif", "Noto Sans CJK SC", serif
}

* {
    box-sizing: border-box
}

body {
    margin: 0;
    height: 100vh;
    display: flex;
    flex-direction: column;
    overflow: hidden;
    position: relative;
    background: var(--face);
    font: 12px/16px var(--font);
    color: #000
}

button, input, select {
    font: inherit;
    color: inherit
}

button {
    border: 0;
    padding: 0;
    background: none;
    white-space: nowrap
}

svg {
    width: 16px;
    height: 16px;
    flex: none
}

ul {
    list-style: none;
    margin: 0;
    padding: 0
}

.sprite {
    position: absolute;
    width: 0;
    height: 0
}

/* menu and toolbars */
.menubar {
    display: flex;
    align-items: flex-end;
    height: 14px;
    padding-bottom: 2px;
    margin-left: -9px;
    overflow: hidden
}

.menubar button {
    display: flex;
    align-items: center;
    gap: 2px;
    flex: none;
    text-align: left
}

.m2 {
    width: 52px
}

.m3 {
    width: 64px
}

.m4 {
    width: 72px
}

.m5 {
    width: 88px
}

.toolrow {
    display: flex;
    gap: 3px;
    height: 26px;
    padding-bottom: 2px;
    overflow: hidden
}

.toolrow.top {
    height: 27px;
    gap: 2px
}

.toolrow.last {
    height: 25px;
    padding-bottom: 1px
}

.bar {
    display: flex;
    align-items: center;
    flex: none;
    border-radius: 3px;
    background: linear-gradient(#fcfbf8, #f4f2e8 50%, #e9e6d6)
}

.bar.first {
    padding-left: 8px
}

.bar.grow {
    flex: 1 0 auto
}

.bar.grip::before {
    content: "";
    width: 3px;
    height: 16px;
    margin: 0 1px 0 4px;
    background: repeating-linear-gradient(#c1beb0 0 3px, transparent 3px 5px)
}

.tool {
    display: flex;
    align-items: center;
    gap: 4px;
    flex: none;
    height: 22px;
    padding: 0 3px 0 4px
}

.tool[disabled] {
    color: var(--line)
}

.tool.active {
    padding: 0 2px 0 3px;
    border: 1px solid var(--pick);
    background: #e1e6ec
}

.latin {
    font: 10px/16px "Liberation Mono", monospace
}

.sigma {
    width: 16px;
    font-size: 16px;
    text-align: center
}

.sep {
    flex: none;
    width: 6px;
    height: 16px;
    border-right: 1px solid #fff;
    box-shadow: inset -1px 0 #c5c2b4
}

.arrow {
    flex: none;
    width: 10px;
    height: 3px;
    background: linear-gradient(#000, #000) center top / 5px 1px no-repeat, linear-gradient(#000, #000) center 1px / 3px 1px no-repeat, linear-gradient(#000, #000) center 2px / 1px 1px no-repeat
}

.first .arrow {
    width: 13px
}

.arrow.off {
    opacity: .35
}

.combo {
    position: relative;
    flex: none;
    width: 70px;
    height: 20px;
    margin-right: 2px;
    background: #fff
}

.combo.narrow {
    width: 58px
}

.combo select {
    appearance: none;
    width: 100%;
    height: 18px;
    padding: 0 0 0 2px;
    border: 0;
    background: none;
    opacity: 1
}

.combo::after {
    content: "";
    position: absolute;
    right: 4px;
    top: 9px;
    border: 3px solid transparent;
    border-top-color: #000;
    border-bottom: 0
}

.combo.off {
    width: 56px;
    margin: 0 0 0 4px;
    border: 1px solid var(--line);
    background: #f4f2e8
}

.combo.off::after {
    top: 8px;
    border-top-color: var(--line)
}

.viewmode {
    display: flex;
    align-items: center;
    gap: 2px;
    height: 20px;
    padding-left: 4px;
    margin-left: 1px;
    background: #fff
}

.viewmode .combo {
    width: 42px;
    margin: 0
}

/* docked panels */
main {
    display: flex;
    flex: 1;
    min-height: 0
}

.nav-panel, .list-panel {
    display: flex;
    flex-direction: column;
    flex: none
}

.nav-panel {
    width: 176px;
    margin-right: 4px
}

.list-panel {
    width: 188px;
    margin-right: 2px
}

.panel-head {
    display: flex;
    align-items: center;
    flex: none;
    height: 15px;
    border: 1px solid #8c8a80;
    border-left: 0
}

.panel-head span {
    flex: 1;
    white-space: nowrap
}

.stack {
    flex: none;
    height: 21px;
    margin: 1px 2px 0 0;
    padding-right: 14px;
    border-top: 1px solid var(--line);
    border-right: 1px solid var(--line);
    box-shadow: inset 0 1px #fff, 0 1px var(--line)
}

.fold {
    display: flex;
    align-items: center;
    flex: none;
    height: 28px;
    margin: 1px 2px 0 0;
    border-top: 1px solid var(--line);
    background: linear-gradient(#fcfbf8, var(--face))
}

.fold button {
    width: 12px;
    margin-left: -3px;
    font: bold 18px/16px "Liberation Sans", sans-serif;
    color: #00706c
}

.fold .minus {
    width: 16px;
    height: 8px;
    margin-left: 5px;
    background: linear-gradient(#013c3a, #013c3a) 0 0 / 9px 3px no-repeat, linear-gradient(#013c3a, #013c3a) 7px 5px / 9px 3px no-repeat
}

.tree {
    flex: 1;
    min-height: 0;
    overflow: hidden;
    margin-right: 2px;
    padding-top: 1px;
    border: 1px solid var(--edge);
    border-left: 0;
    border-bottom: 0;
    background: #fff
}

.node, .tree li li {
    display: flex;
    align-items: center;
    height: 16px;
    white-space: nowrap
}

.node {
    gap: 4px
}

.node::before {
    content: "";
    width: 5px;
    height: 9px;
    border: 1px solid var(--edge);
    border-left: 0;
    background: linear-gradient(#000, #000) 0 3px / 3px 1px no-repeat #f4f2e8
}

.node em {
    align-self: flex-start;
    margin-left: -3px;
    padding: 0 1px;
    background: #ffe818;
    font: bold 9px/9px "Liberation Sans", sans-serif
}

.tree li li {
    position: relative;
    padding-left: 29px
}

.tree li li::before {
    content: "";
    position: absolute;
    left: 18px;
    top: 0;
    width: 10px;
    height: 8px;
    border-left: 1px dotted var(--line);
    border-bottom: 1px dotted var(--line)
}

.tree li li:not(:last-child)::after {
    content: "";
    position: absolute;
    left: 18px;
    top: 8px;
    height: 8px;
    border-left: 1px dotted var(--line)
}

.tree li li span {
    margin-left: 3px;
    padding: 0 2px
}

.tree .current {
    background: var(--face)
}

.tree .selected {
    background: var(--pick)
}

.list-tools {
    height: 26px;
    margin: 1px 0 1px 1px;
    gap: 2px
}

.list-tools .tool {
    padding: 0 2px
}

.search {
    display: flex;
    flex: none;
    height: 24px;
    margin: 0 0 1px 1px
}

.search input {
    flex: 1;
    min-width: 0;
    padding: 0 2px 3px;
    border: 1px solid var(--edge)
}

.search input::placeholder {
    color: #808080
}

.search button {
    width: 26px;
    padding-top: 4px;
    background: #f8f7f2
}

.tree.items {
    margin: 0;
    padding: 1px 0 0 8px;
    border-left: 1px solid var(--edge)
}

.items .node {
    gap: 5px
}

.items .node::before {
    width: 9px;
    border: 1px solid var(--edge);
    background-position: 2px 3px
}

.items li li {
    padding-left: 36px
}

.items li li::before, .items li li:not(:last-child)::after {
    left: 23px
}

.items li li svg {
    width: 12px;
    height: 12px
}

.items li li span {
    margin-left: 4px
}

/* drawing area */
.work {
    display: flex;
    flex-direction: column;
    flex: 1;
    min-width: 0
}

.canvas {
    flex: 1;
    min-height: 0;
    background: #000
}

.canvas svg {
    display: block;
    width: 100%;
    height: 100%
}

.dims {
    fill: #ddd;
    text-anchor: middle;
    font: 15px "Liberation Sans", sans-serif
}

.dims .tag {
    font-size: 14px
}

/* floating property window */
.dialog {
    position: absolute;
    left: 326px;
    top: 254px;
    bottom: 0;
    width: 358px;
    display: flex;
    flex-direction: column;
    padding: 0 5px;
    background: linear-gradient(90deg, #0019cf, #0a52f0 2px, #0046e8 353px, #00138c)
}

.dialog header {
    display: flex;
    align-items: center;
    justify-content: space-between;
    height: 22px;
    flex: none;
    margin: 0 -5px;
    padding: 1px 6px 0 4px;
    background: linear-gradient(#0a3cc8, #3c8cff 2px, #0058e6 5px, #0060f4 14px, #006cff 20px, #0040d0)
}

.dialog h2 {
    margin: 0;
    font-size: 13px;
    color: #fff
}

.dialog header button {
    width: 13px;
    height: 13px;
    border: 1px solid #fff;
    border-radius: 2px;
    background: #e0431c;
    font: bold 10px/11px "DejaVu Sans", sans-serif;
    color: #fff
}

.sheet {
    flex: 1;
    min-height: 0;
    padding-right: 2px;
    overflow: hidden;
    background: #fff
}

table {
    width: 100%;
    table-layout: fixed;
    border-collapse: separate;
    border-spacing: 0
}

th, td {
    height: 19px;
    padding: 0;
    border-right: 1px solid var(--cell);
    border-bottom: 1px solid var(--cell);
    font-weight: normal;
    line-height: 16px;
    white-space: nowrap
}

thead th {
    height: 24px;
    background: linear-gradient(#fcfbf8, var(--face))
}

.num {
    width: 22px
}

.name {
    width: 121px
}

thead .val {
    background: linear-gradient(#fadba0, #f0bc58);
    color: #5c005c
}

tbody th {
    background: linear-gradient(90deg, #fcfbf8, var(--face));
    font: 11px/16px "Liberation Sans", sans-serif
}

td {
    padding-left: 2px
}

td:nth-child(2) {
    padding-left: 20px
}

.key {
    color: #00f
}

.editing th {
    background: #ffcf87;
    color: #5c005c
}

.editing td:nth-child(2) {
    background: var(--pick);
    color: #fff
}

.edit {
    display: flex;
    justify-content: space-between;
    height: 16px
}

.edit input {
    width: 19px;
    height: 13px;
    padding: 0 2px;
    border: 0;
    background: var(--pick);
    color: #fff
}

.edit button {
    width: 15px;
    margin-right: 1px;
    border-radius: 1px;
    background: #c1d3fb
}

.edit svg {
    width: 15px
}

.group td:nth-child(2) {
    padding-left: 2px;
    color: #808080
}

.group button {
    width: 13px;
    height: 13px;
    margin-right: 5px;
    border: 1px solid var(--line);
    background: #f4f2e8;
    line-height: 11px;
    color: #000
}

/* review mark around the two dimension values */
.mark {
    position: absolute;
    left: 144px;
    top: 81px;
    width: 47px;
    height: 45px;
    border: 1px solid #f05050;
    border-radius: 50%
}
```
